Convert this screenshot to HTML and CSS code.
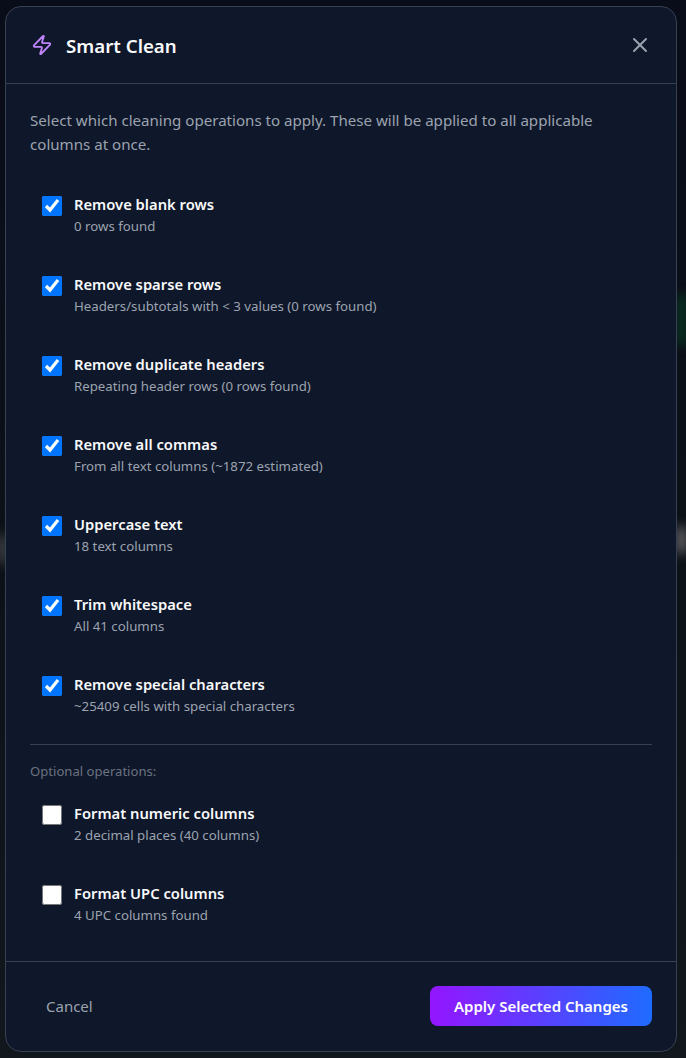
FILE: index.html
```html
<!DOCTYPE html>
<html lang="en">
<head>
    <meta charset="UTF-8">
    <meta name="viewport" content="width=device-width, initial-scale=1.0">
    <title>Smart Clean</title>
    <link rel="stylesheet" href="styles.css">
</head>
<body>
    <!-- blurred page behind the dialog -->
    <div class="glow glow-green"></div>
    <div class="glow glow-left"></div>
    <div class="glow glow-right"></div>

    <div class="dialog">
        <div class="dialog-header">
            <div class="header-title">
                <svg class="bolt" width="22" height="22" viewBox="0 0 24 24" fill="none" stroke="currentColor" stroke-width="2" stroke-linecap="round" stroke-linejoin="round">
                    <path d="M4 14a1 1 0 0 1-.78-1.63l9.9-10.2a.5.5 0 0 1 .86.46l-1.92 6.02A1 1 0 0 0 13 10h7a1 1 0 0 1 .78 1.63l-9.9 10.2a.5.5 0 0 1-.86-.46l1.92-6.02A1 1 0 0 0 11 14z"/>
                </svg>
                <h2>Smart Clean</h2>
            </div>
            <button class="close-btn" aria-label="Close">
                <svg width="24" height="24" viewBox="0 0 24 24" fill="none" stroke="currentColor" stroke-width="2" stroke-linecap="round" stroke-linejoin="round">
                    <path d="M18 6 6 18"/>
                    <path d="m6 6 12 12"/>
                </svg>
            </button>
        </div>

        <div class="dialog-body">
            <p class="intro">Select which cleaning operations to apply. These will be applied to all applicable columns at once.</p>

            <div class="options">
                <label class="option">
                    <input type="checkbox" checked>
                    <span class="option-text"><span class="option-title">Remove blank rows</span><span class="option-desc">0 rows found</span></span>
                </label>
                <label class="option">
                    <input type="checkbox" checked>
                    <span class="option-text"><span class="option-title">Remove sparse rows</span><span class="option-desc">Headers/subtotals with &lt; 3 values (0 rows found)</span></span>
                </label>
                <label class="option">
                    <input type="checkbox" checked>
                    <span class="option-text"><span class="option-title">Remove duplicate headers</span><span class="option-desc">Repeating header rows (0 rows found)</span></span>
                </label>
                <label class="option">
                    <input type="checkbox" checked>
                    <span class="option-text"><span class="option-title">Remove all commas</span><span class="option-desc">From all text columns (~1872 estimated)</span></span>
                </label>
                <label class="option">
                    <input type="checkbox" checked>
                    <span class="option-text"><span class="option-title">Uppercase text</span><span class="option-desc">18 text columns</span></span>
                </label>
                <label class="option">
                    <input type="checkbox" checked>
                    <span class="option-text"><span class="option-title">Trim whitespace</span><span class="option-desc">All 41 columns</span></span>
                </label>
                <label class="option">
                    <input type="checkbox" checked>
                    <span class="option-text"><span class="option-title">Remove special characters</span><span class="option-desc">~25409 cells with special characters</span></span>
                </label>
            </div>

            <div class="optional">
                <p class="optional-label">Optional operations:</p>
                <div class="options">
                    <label class="option">
                        <input type="checkbox">
                        <span class="option-text"><span class="option-title">Format numeric columns</span><span class="option-desc">2 decimal places (40 columns)</span></span>
                    </label>
                    <label class="option">
                        <input type="checkbox">
                        <span class="option-text"><span class="option-title">Format UPC columns</span><span class="option-desc">4 UPC columns found</span></span>
                    </label>
                </div>
            </div>
        </div>

        <div class="dialog-footer">
            <button class="cancel-btn">Cancel</button>
            <button class="apply-btn">Apply Selected Changes</button>
        </div>
    </div>
</body>
</html>
```

FILE: styles.css
```css
* {
    box-sizing: border-box;
}

html, body {
    height: 100%;
}

body {
    margin: 0;
    padding: 6px 9px 6px 5px;
    overflow: hidden;
    position: relative;
    font-family: "Noto Sans", "Open Sans", sans-serif;
    background: linear-gradient(180deg, #090c19 0%, #0c1118 50%, #12171d 100%);
}

.glow {
    position: absolute;
    filter: blur(6px);
}

.glow-green {
    right: 0;
    top: 295px;
    width: 9px;
    height: 50px;
    background: #0a3f25;
}

.glow-left {
    left: 0;
    top: 535px;
    width: 6px;
    height: 28px;
    background: #666;
}

.glow-right {
    right: 0;
    top: 527px;
    width: 9px;
    height: 26px;
    background: #777;
}

.dialog {
    position: relative;
    height: 1046px;
    display: flex;
    flex-direction: column;
    background-color: #0f172a;
    border: 1px solid #374151;
    border-radius: 16px;
}

.dialog-header {
    display: flex;
    justify-content: space-between;
    align-items: center;
    height: 77px;
    padding: 0 24px;
    border-bottom: 1px solid #374151;
}

.header-title {
    display: flex;
    align-items: center;
    gap: 12px;
}

.bolt {
    margin: 0 1px;
    color: #c084fc;
}

.header-title h2 {
    margin: 2px 0 0;
    font-size: 18.7px;
    font-weight: 600;
    color: #f9fafb;
}

.close-btn {
    display: flex;
    padding: 0;
    background: none;
    border: none;
    color: #9ca3af;
}

.dialog-body {
    flex: 1;
    padding: 24px;
}

.intro {
    margin: 0 0 24px;
    font-size: 15.1px;
    line-height: 24px;
    color: #9ca3af;
}

.options {
    display: flex;
    flex-direction: column;
    gap: 12px;
}

.option {
    display: flex;
    align-items: flex-start;
    gap: 12px;
    height: 68px;
    padding: 12px;
}

.option input {
    width: 20px;
    height: 20px;
    margin: 4px 0 0;
    accent-color: #0075ff;
}

.option-text {
    display: flex;
    flex-direction: column;
}

.option-title {
    font-size: 14.75px;
    font-weight: 600;
    line-height: 24px;
    color: #f9fafb;
}

.option-desc {
    font-size: 13.25px;
    line-height: 20px;
    color: #9ca3af;
}

.optional {
    margin-top: 16px;
    padding-top: 16px;
    border-top: 1px solid #374151;
}

.optional-label {
    margin: 0 0 8px;
    font-size: 13.1px;
    line-height: 20px;
    color: #6b7280;
}

.dialog-footer {
    display: flex;
    justify-content: space-between;
    align-items: center;
    height: 91px;
    padding: 0 24px;
    border-top: 1px solid #374151;
}

.cancel-btn {
    padding: 8px 16px;
    background: none;
    border: none;
    font-family: inherit;
    font-size: 15px;
    color: #9ca3af;
}

.apply-btn {
    width: 222px;
    height: 40px;
    background: linear-gradient(90deg, #9415ff, #1f6bff);
    border: none;
    border-radius: 8px;
    font-family: inherit;
    font-size: 15px;
    font-weight: 600;
    color: #fff;
}
```
